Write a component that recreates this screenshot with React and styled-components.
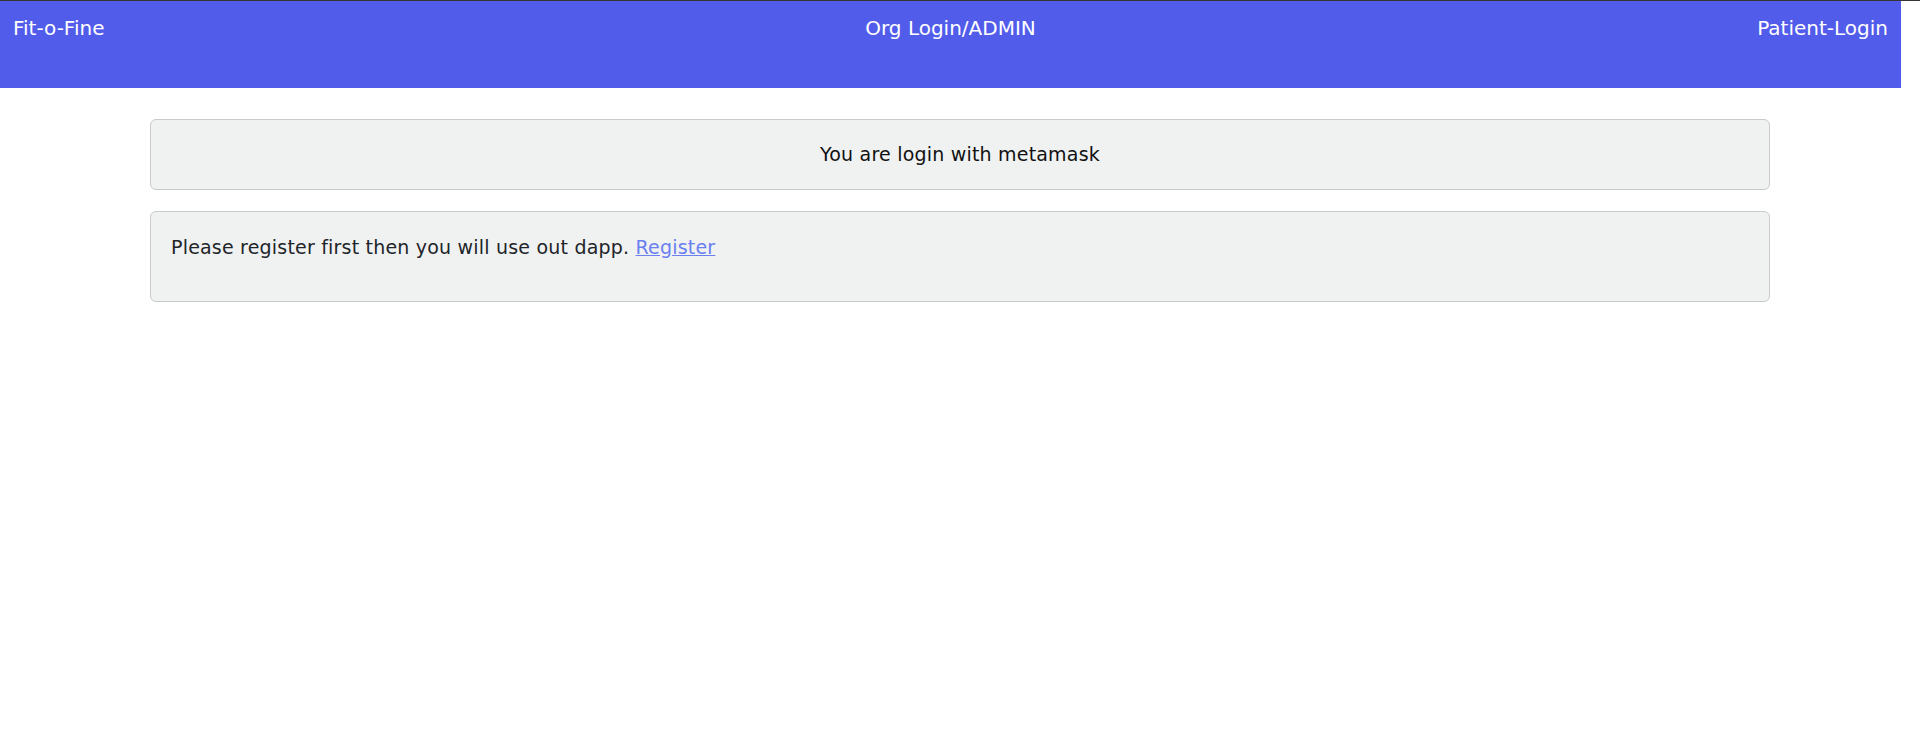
import styled, { createGlobalStyle } from "styled-components";

const GlobalStyle = createGlobalStyle`
  html, body {
    margin: 0;
    padding: 0;
    background: #fff;
  }
  body {
    font-family: "DejaVu Sans", "Open Sans", sans-serif;
    color: #212529;
    border-top: 1px solid #353535;
  }
  * {
    box-sizing: border-box;
  }
`;

const Nav = styled.nav`
  display: grid;
  grid-template-columns: 1fr 1fr 1fr;
  align-items: start;
  width: 1901px;
  height: 87px;
  padding: 14px 13px 0 13px;
  background-color: #525ceb;
`;

const NavLink = styled.a`
  color: #fff;
  font-size: 20px;
  line-height: 27px;
  text-decoration: none;
  text-align: ${(props) => props.align || "left"};
  cursor: pointer;
`;

const Main = styled.main`
  display: flex;
  flex-direction: column;
  gap: 21px;
  width: 1620px;
  margin: 31px auto 0 auto;
`;

const Card = styled.div`
  background-color: #f0f1f1;
  border: 1px solid #c9cacb;
  border-radius: 6px;
  padding: ${(props) => props.padding || "21px 20px"};
  text-align: ${(props) => props.align || "left"};
`;

const Text = styled.p`
  margin: 0;
  font-size: 19px;
  line-height: 27px;
  letter-spacing: 0.2px;
  color: ${(props) => props.color || "#212529"};
`;

const Link = styled.a`
  color: #6a7ff0;
  text-decoration: underline;
  cursor: pointer;
`;

export default function App() {
  return (
    <>
      <GlobalStyle />
      <Nav>
        <NavLink>Fit-o-Fine</NavLink>
        <NavLink align="center">Org Login/ADMIN</NavLink>
        <NavLink align="right">Patient-Login</NavLink>
      </Nav>
      <Main>
        <Card align="center">
          <Text color="#111">You are login with metamask</Text>
        </Card>
        <Card padding="22px 20px 40px 20px">
          <Text>
            Please register first then you will use out dapp. <Link>Register</Link>
          </Text>
        </Card>
      </Main>
    </>
  );
}
